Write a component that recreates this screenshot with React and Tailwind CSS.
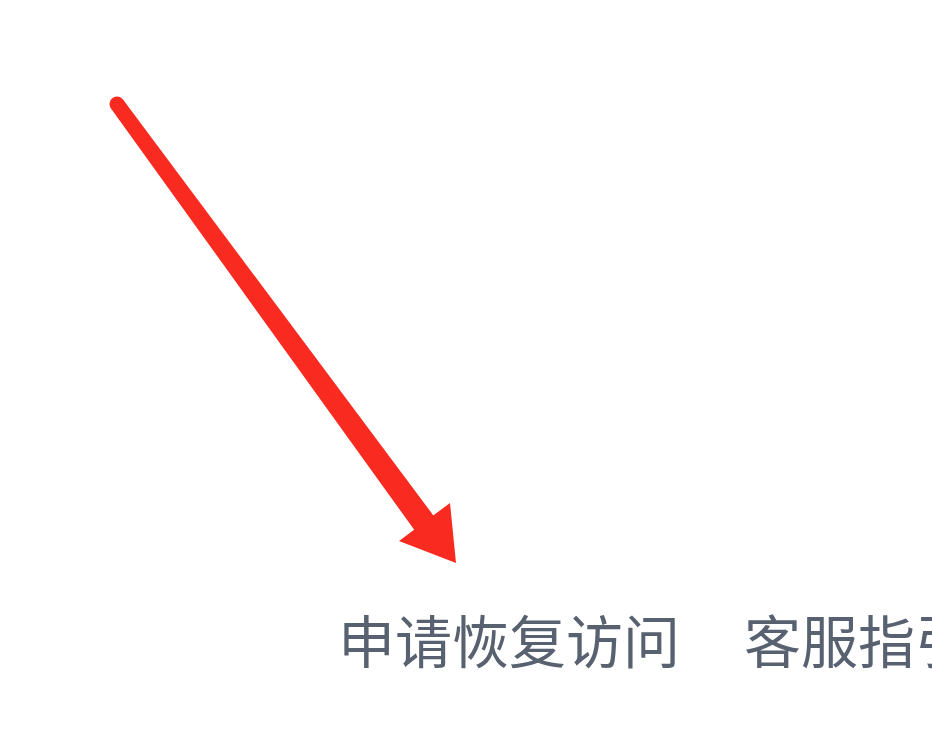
import React from "react";

// red annotation arrow drawn over the page
function Arrow() {
  return (
    <svg
      className="absolute left-0 top-0 pointer-events-none"
      width="932"
      height="732"
      viewBox="0 0 932 732"
    >
      <circle cx="117" cy="104" r="7.5" fill="#f92b20" />
      <polygon
        points="123,99.6 111,108.4 417.3,534.1 436.7,519.9"
        fill="#f92b20"
      />
      <polygon points="450,503 456,563 399,541" fill="#f92b20" />
    </svg>
  );
}

export default function App() {
  return (
    <div className="relative w-[932px] h-[732px] overflow-hidden bg-white">
      <div
        className="flex items-center whitespace-nowrap pt-[602px] pl-[338px] text-[57px] leading-[72px] text-[#586170]"
        style={{ fontFamily: '"Noto Sans CJK SC", "Noto Sans", sans-serif' }}
      >
        <span>申请恢复访问</span>
        <span className="ml-[34px] mr-[30px] h-[38px] w-[3px] bg-[#e4e6ea]" />
        <span>客服指引</span>
      </div>
      <Arrow />
    </div>
  );
}
